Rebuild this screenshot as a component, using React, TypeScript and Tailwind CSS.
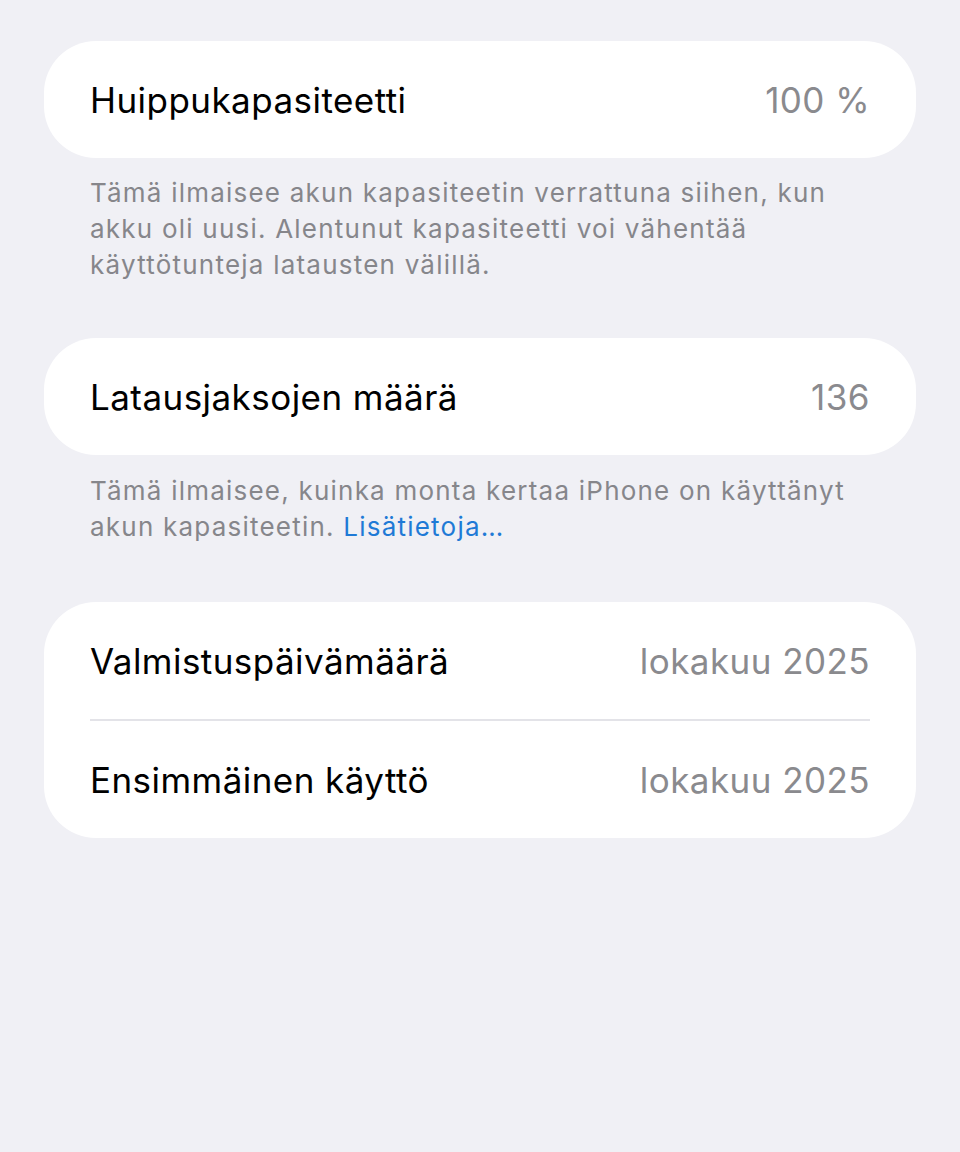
import React from "react";

const font = { fontFamily: "Inter, 'Noto Sans', sans-serif" };

function Row({ label, value }: { label: string; value: string }) {
  return (
    <div className="flex h-[117px] items-center justify-between pt-[1px]">
      <span className="text-[35px] tracking-[0.45px] text-black">{label}</span>
      <span className="text-[35px] tracking-[0.45px] text-[#8a8a8e]">{value}</span>
    </div>
  );
}

export default function App() {
  return (
    <div className="min-h-[1152px] w-[960px] bg-[#f0f0f5] px-[44px] pt-[41px]" style={font}>
      <div className="rounded-[52px] bg-white px-[46px]">
        <Row label="Huippukapasiteetti" value="100 %" />
      </div>
      <p className="px-[46px] pt-[17px] text-[26px] leading-[36px] tracking-[1.22px] text-[#86868b]">
        Tämä ilmaisee akun kapasiteetin verrattuna siihen, kun
        <br />
        akku oli uusi. Alentunut kapasiteetti voi vähentää
        <br />
        käyttötunteja latausten välillä.
      </p>
      <div className="mt-[55px] rounded-[52px] bg-white px-[46px]">
        <Row label="Latausjaksojen määrä" value="136" />
      </div>
      <p className="px-[46px] pt-[18px] text-[26px] leading-[36px] tracking-[1.22px] text-[#86868b]">
        Tämä ilmaisee, kuinka monta kertaa iPhone on käyttänyt
        <br />
        akun kapasiteetin. <span className="text-[#1f7ad6]">Lisätietoja…</span>
      </p>
      <div className="mt-[57px] rounded-[52px] bg-white px-[46px]">
        <Row label="Valmistuspäivämäärä" value="lokakuu 2025" />
        <div className="h-[2px] bg-[#e3e3e8]" />
        <Row label="Ensimmäinen käyttö" value="lokakuu 2025" />
      </div>
    </div>
  );
}
